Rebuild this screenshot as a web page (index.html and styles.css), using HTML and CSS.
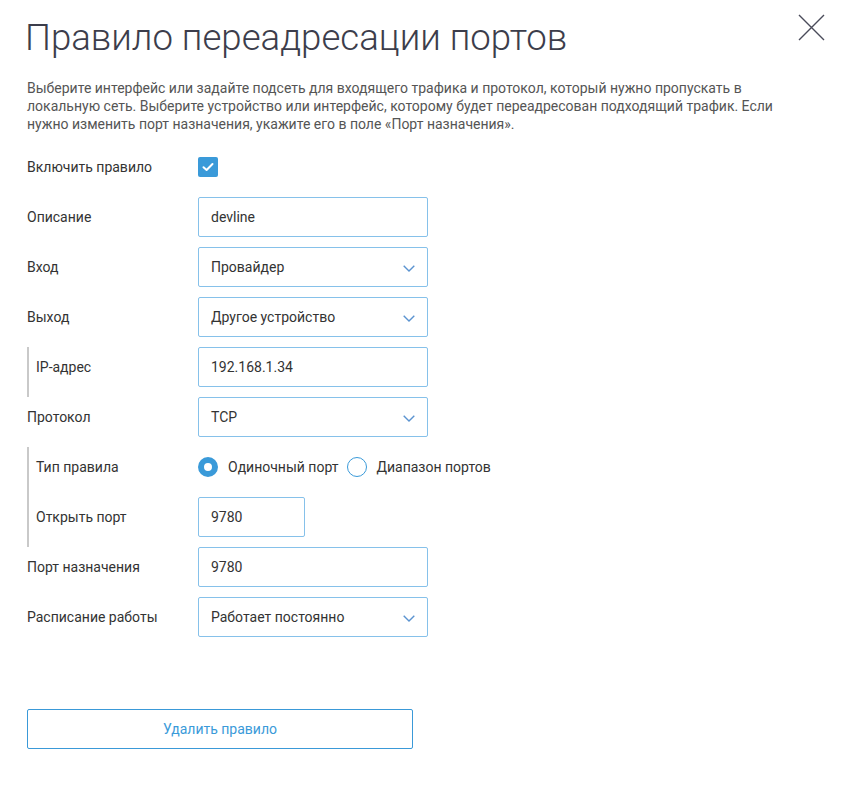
FILE: index.html
```html
<!DOCTYPE html>
<html lang="ru">
<head>
<meta charset="utf-8">
<title>Правило переадресации портов</title>
<link rel="stylesheet" href="styles.css">
</head>
<body>
<div class="dialog">
  <button class="close" aria-label="Закрыть">
    <svg width="27" height="27" viewBox="0 0 27 27"><path d="M1 1 L26 26 M26 1 L1 26" stroke="#4a4b5a" stroke-width="1.4" fill="none"/></svg>
  </button>
  <h1 class="title">Правило переадресации портов</h1>
  <p class="desc">Выберите интерфейс или задайте подсеть для входящего трафика и протокол, который нужно пропускать в локальную сеть. Выберите устройство или интерфейс, которому будет переадресован подходящий трафик. Если нужно изменить порт назначения, укажите его в поле «Порт назначения».</p>

  <div class="form">
    <div class="row">
      <div class="label">Включить правило</div>
      <div class="field"><span class="checkbox"><svg width="20" height="20" viewBox="0 0 20 20"><path d="M5.5 10.2 L8.6 13 L14.5 7" stroke="#fff" stroke-width="2" fill="none" stroke-linecap="round" stroke-linejoin="round"/></svg></span></div>
    </div>
    <div class="row">
      <div class="label">Описание</div>
      <div class="field"><div class="input">devline</div></div>
    </div>
    <div class="row">
      <div class="label">Вход</div>
      <div class="field"><div class="input select">Провайдер<svg class="chev" width="12" height="7" viewBox="0 0 12 7"><path d="M0.7 0.7 L6 6 L11.3 0.7" stroke="#5b93d0" stroke-width="1.4" fill="none"/></svg></div></div>
    </div>
    <div class="row">
      <div class="label">Выход</div>
      <div class="field"><div class="input select">Другое устройство<svg class="chev" width="12" height="7" viewBox="0 0 12 7"><path d="M0.7 0.7 L6 6 L11.3 0.7" stroke="#5b93d0" stroke-width="1.4" fill="none"/></svg></div></div>
    </div>
    <div class="row sub">
      <div class="label">IP-адрес</div>
      <div class="field"><div class="input">192.168.1.34</div></div>
    </div>
    <div class="row">
      <div class="label">Протокол</div>
      <div class="field"><div class="input select">TCP<svg class="chev" width="12" height="7" viewBox="0 0 12 7"><path d="M0.7 0.7 L6 6 L11.3 0.7" stroke="#5b93d0" stroke-width="1.4" fill="none"/></svg></div></div>
    </div>
    <div class="row sub">
      <div class="label">Тип правила</div>
      <div class="field radios">
        <span class="radio on"></span><span class="rtext first">Одиночный порт</span>
        <span class="radio"></span><span class="rtext">Диапазон портов</span>
      </div>
    </div>
    <div class="row sub">
      <div class="label">Открыть порт</div>
      <div class="field"><div class="input short">9780</div></div>
    </div>
    <div class="row">
      <div class="label">Порт назначения</div>
      <div class="field"><div class="input">9780</div></div>
    </div>
    <div class="row">
      <div class="label">Расписание работы</div>
      <div class="field"><div class="input select">Работает постоянно<svg class="chev" width="12" height="7" viewBox="0 0 12 7"><path d="M0.7 0.7 L6 6 L11.3 0.7" stroke="#5b93d0" stroke-width="1.4" fill="none"/></svg></div></div>
    </div>
  </div>

  <button class="delete">Удалить правило</button>
</div>
</body>
</html>
```

FILE: styles.css
```css
* { box-sizing: border-box; }
html, body { margin: 0; padding: 0; background: #fff; }
body {
  font-family: Roboto, "Noto Sans", sans-serif;
  color: #333;
  width: 844px;
  height: 790px;
  overflow: hidden;
}
.dialog {
  position: relative;
  padding: 14px 0 0 27px;
}
.close {
  position: absolute;
  top: 14px;
  right: 19px;
  width: 27px;
  height: 27px;
  padding: 0;
  border: 0;
  background: none;
}
.close svg { display: block; }
.title {
  margin: 0 0 0 -2px;
  font-size: 36.6px;
  font-weight: 300;
  line-height: 48px;
  color: #3c3d4b;
}
.desc {
  margin: 17px 0 0 0;
  width: 760px;
  font-size: 14px;
  line-height: 18px;
  color: #555;
}
.form {
  margin-top: 14px;
  display: flex;
  flex-direction: column;
}
.row {
  display: flex;
  height: 50px;
}
.label {
  width: 171px;
  height: 40px;
  display: flex;
  align-items: center;
  font-size: 14px;
  color: #333;
}
.row.sub .label {
  height: 50px;
  padding-bottom: 10px;
  border-left: 2px solid #c9c9c9;
  padding-left: 7px;
}
.field {
  height: 40px;
  display: flex;
  align-items: center;
}
.checkbox {
  width: 20px;
  height: 20px;
  border-radius: 2px;
  background: #3a9ad9;
  display: block;
}
.checkbox svg { display: block; }
.input {
  position: relative;
  width: 230px;
  height: 40px;
  border: 1px solid #86c1ea;
  border-radius: 2px;
  padding: 0 12px;
  display: flex;
  align-items: center;
  font-size: 14px;
  color: #333;
}
.input.short { width: 107px; }
.chev {
  position: absolute;
  right: 12px;
  top: 17px;
}
.radio {
  width: 20px;
  height: 20px;
  border-radius: 50%;
  border: 1px solid #3a9ad9;
  display: block;
  flex: none;
}
.radio.on {
  border: 6px solid #3a9ad9;
}
.rtext {
  font-size: 14px;
  color: #333;
  margin-left: 9px;
}
.rtext.first {
  margin-left: 10px;
  margin-right: 9px;
}
.delete {
  margin-top: 62px;
  width: 386px;
  height: 40px;
  border: 1px solid #3a99d8;
  border-radius: 2px;
  background: #fff;
  color: #3a9ad9;
  font-family: Roboto, "Noto Sans", sans-serif;
  font-size: 14px;
  display: block;
}
```
